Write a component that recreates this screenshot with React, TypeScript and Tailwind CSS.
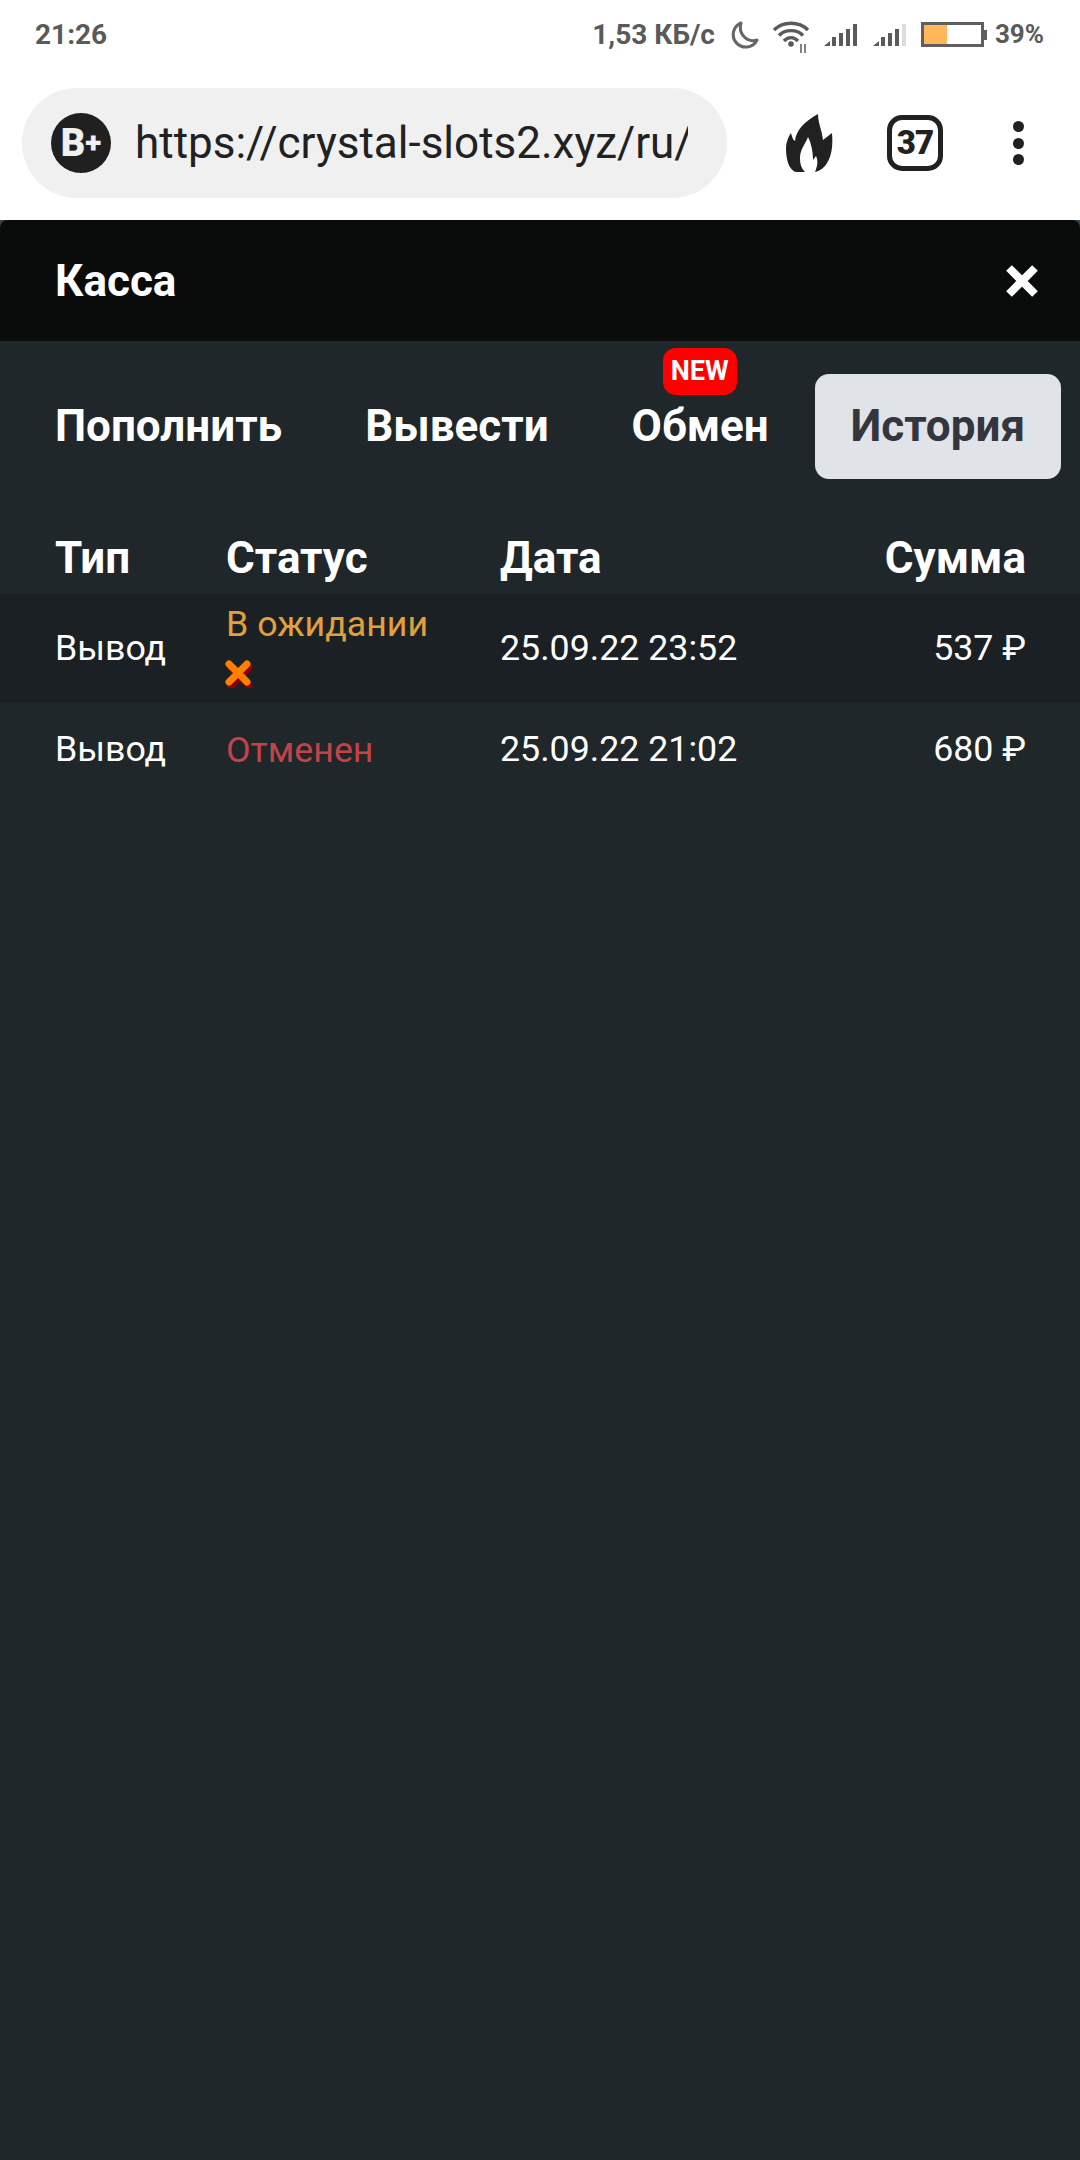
const font = { fontFamily: "Roboto, sans-serif" };

function Signal({ dim }: { dim?: boolean }) {
  return (
    <svg width="34" height="24" viewBox="0 0 34 24">
      <path d="M0 23 L6 18 V23 Z" fill="#5a5a5a" />
      <rect x="8" y="14" width="4" height="9" fill="#5a5a5a" />
      <rect x="15" y="10" width="4" height="13" fill="#5a5a5a" />
      <rect x="22" y="6" width="4" height="17" fill="#5a5a5a" />
      <rect x="29" y="1" width="4" height="22" fill={dim ? "#dcdcdc" : "#5a5a5a"} />
    </svg>
  );
}

function StatusBar() {
  return (
    <div className="h-[64px] bg-white flex items-center pl-[35px] pr-[36px] text-[#5a5a5a] text-[28px] font-bold pt-[5px]">
      <span>21:26</span>
      <div className="ml-auto flex items-center">
        <span>1,53 КБ/с</span>
        {/* moon */}
        <svg className="ml-[15px]" width="29" height="28" viewBox="0 0 29 28" fill="none">
          <path d="M11 2 A12.5 12.5 0 1 0 27 19 C17 22 8 13 11 2 Z" stroke="#666" strokeWidth="3" strokeLinejoin="round" />
        </svg>
        {/* wifi */}
        <svg className="ml-[14px] mt-[4px]" width="37" height="32" viewBox="0 0 37 32" fill="none">
          <path d="M1 9 C10 0 26 0 35 9" stroke="#5a5a5a" strokeWidth="3.4" />
          <path d="M6 14.5 C12 8 24 8 30 14.5" stroke="#5a5a5a" strokeWidth="3.4" />
          <path d="M11 20 C15 15.5 21 15.5 25 20" stroke="#5a5a5a" strokeWidth="3.4" />
          <circle cx="18" cy="23" r="2.8" fill="#5a5a5a" />
          <path d="M28 23 V32 M32 23 V32" stroke="#777" strokeWidth="1.8" />
        </svg>
        <span className="ml-[14px] flex"><Signal /></span>
        <span className="ml-[15px] flex"><Signal dim /></span>
        {/* battery */}
        <div className="ml-[14px] flex items-center">
          <div className="w-[63px] h-[25px] border-[3px] border-[#5f5f5f] bg-white">
            <div className="w-[23px] h-full bg-[#ffb75a]"></div>
          </div>
          <div className="w-[3px] h-[10px] bg-[#5f5f5f]"></div>
        </div>
        <span className="ml-[8px] text-[26px]">39%</span>
      </div>
    </div>
  );
}

function ChromeBar() {
  return (
    <div className="h-[156px] bg-white pl-[22px] pt-[24px]">
      <div className="h-[110px] flex items-center">
        <div className="w-[705px] h-[110px] rounded-[55px] bg-[#f0f0f0] flex items-center pl-[29px]">
          <div className="w-[60px] h-[60px] rounded-full bg-[#202020] text-[#f0f0f0] font-black flex items-center justify-center leading-none">
            <span className="text-[38px]">B</span>
            <span className="text-[30px]">+</span>
          </div>
          <div className="ml-[24px] w-[553px] overflow-hidden whitespace-nowrap text-[#212121] text-[44px]">
            https://crystal-slots2.xyz/ru/
          </div>
        </div>
        {/* flame */}
        <svg className="ml-[48px] -mt-[2px]" width="70" height="75" viewBox="0 0 70 75">
          <path
            fill="#212121"
            d="M43 9 C43 18 47 25 48 35 L57 28 C58 40 57 50 52 58 C50 62 45 66 40 67 C43 60 43 55 41 51 L38 55 C38 46 36 38 33 32 C31 38 25 44 25 53 C25 60 27 64 30 67 L21 67 C14 65 11 55 11 43 C11 38 13 32 16 28 C17 32 18 35 20 36 C21 25 30 16 43 9 Z"
          />
        </svg>
        <div className="ml-[42px] w-[56px] h-[56px] rounded-[15px] border-[5px] border-[#212121] flex items-center justify-center text-[#212121] font-black text-[33px] tracking-[-1px]">
          37
        </div>
        <div className="ml-[70px] flex flex-col gap-[5.5px]">
          <div className="w-[11px] h-[11px] rounded-full bg-[#212121]"></div>
          <div className="w-[11px] h-[11px] rounded-full bg-[#212121]"></div>
          <div className="w-[11px] h-[11px] rounded-full bg-[#212121]"></div>
        </div>
      </div>
    </div>
  );
}

function Row({ status, statusColor, date, sum, cancel, shaded }: { status: string; statusColor: string; date: string; sum: string; cancel?: boolean; shaded?: boolean }) {
  return (
    <div className={`grid grid-cols-[171px_274px_1fr_auto] items-center pl-[55px] pr-[54px] text-white text-[35.75px] ${shaded ? "bg-[#1a2023] h-[109px]" : "h-[93px]"}`}>
      <span>Вывод</span>
      <div className={`${statusColor} leading-[50px]`}>
        <div>{status}</div>
        {cancel && (
          <div className="h-[50px] flex items-center">
            <svg className="-ml-[1px]" width="28" height="28" viewBox="0 0 28 28">
              <path d="M4 6 L22 24 M22 6 L4 24" stroke="#8b0000" strokeWidth="7" strokeLinecap="round" transform="translate(2 2)" />
              <path d="M4 4 L22 22 M22 4 L4 22" stroke="#ff8000" strokeWidth="7" strokeLinecap="round" />
            </svg>
          </div>
        )}
      </div>
      <span>{date}</span>
      <span>{sum}</span>
    </div>
  );
}

export default function App() {
  return (
    <div className="w-[1080px] h-[2160px] bg-[#1f272a] overflow-hidden flex flex-col" style={font}>
      <StatusBar />
      <ChromeBar />
      <div className="bg-[#3a4347]">
        <div className="h-[121px] bg-[#0a0c0c] rounded-t-[8px] flex items-center justify-between pl-[55px] pr-[41px]">
          <span className="text-white font-bold text-[44px]">Касса</span>
          <svg width="34" height="34" viewBox="0 0 34 34">
            <path d="M4 4 L30 30 M30 4 L4 30" stroke="#fff" strokeWidth="8" />
          </svg>
        </div>
      </div>
      <div className="flex items-center h-[170px] pl-[55px] text-white font-bold text-[44px]">
        <span>Пополнить</span>
        <span className="ml-[83px]">Вывести</span>
        <span className="ml-[83px] relative">
          Обмен
          <span className="absolute left-[31px] -top-[45px] w-[74px] h-[47px] rounded-[13px] bg-[#ff0000] text-[27px] flex items-center justify-center">NEW</span>
        </span>
        <span className="ml-[46px] w-[246px] h-[105px] rounded-[14px] bg-[#e0e3e8] text-[#33363d] flex items-center justify-center">История</span>
      </div>
      <div className="grid grid-cols-[171px_274px_1fr_auto] items-center h-[83px] pt-[11px] pl-[55px] pr-[54px] text-white font-bold text-[44px]">
        <span>Тип</span>
        <span>Статус</span>
        <span>Дата</span>
        <span>Сумма</span>
      </div>
      <Row shaded status="В ожидании" statusColor="text-[#e2a03a]" date="25.09.22 23:52" sum="537 ₽" cancel />
      <Row status="Отменен" statusColor="text-[#c44347]" date="25.09.22 21:02" sum="680 ₽" />
    </div>
  );
}
